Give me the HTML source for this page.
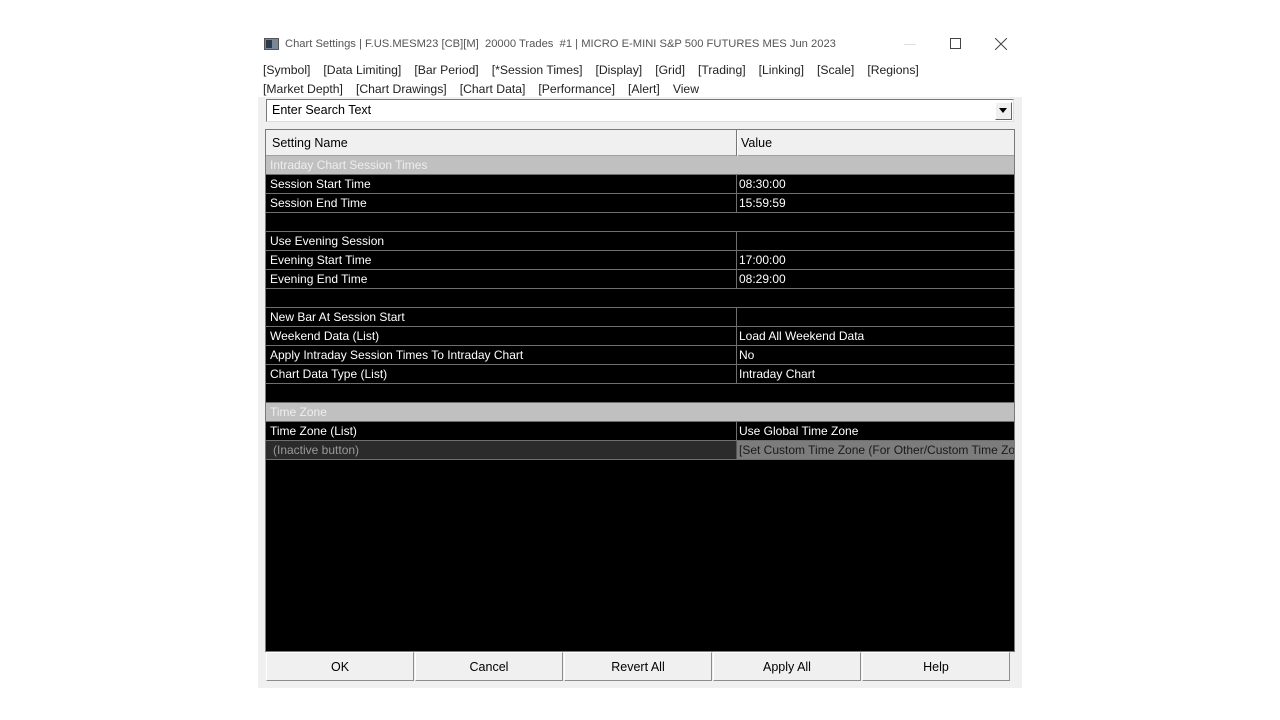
<!DOCTYPE html>
<html><head><meta charset="utf-8"><style>
*{margin:0;padding:0;box-sizing:border-box}
body{width:1280px;height:720px;background:#fff;position:relative;overflow:hidden;font-family:"Liberation Sans",sans-serif;font-size:12px;color:#000}
.a{position:absolute;white-space:nowrap}
.t{color:#555;font-size:11.2px;top:38px}
.m{color:#222;font-size:12.2px}
.m b{font-weight:normal;display:inline-block;width:13px}
.row{position:absolute;left:266px;width:748px;height:19px;background:#000;border-bottom:1px solid #6e6e6e;color:#fff;font-size:12px}
.row span{position:absolute;top:2px;left:4px;white-space:nowrap}
.row .v{left:473px}
.row .d{position:absolute;left:470px;top:0;width:1px;height:18px;background:#6e6e6e}
.grp{background:#c0c0c0;color:#eee}
.btn{position:absolute;top:652px;height:29px;width:148px;background:#f0f0f0;border:1px solid #8c8c8c;border-top-color:#fff;border-left-color:#fff;text-align:center;line-height:28px;font-size:12.5px}
</style></head><body>
<div class="a" style="left:264px;top:38px;width:15px;height:12px;background:#7a8796;border:1px solid #555"></div>
<div class="a" style="left:266px;top:40px;width:6px;height:8px;background:#2b3a4a"></div>
<div class="a t" style="left:285px">Chart Settings | F.US.MESM23 [CB][M]&nbsp; 20000 Trades&nbsp; #1 | MICRO E-MINI S&amp;P 500 FUTURES MES Jun 2023</div>
<div class="a" style="left:904px;top:44px;width:12px;height:1px;background:#ddd"></div>
<div class="a" style="left:950px;top:38px;width:11px;height:11px;border:1px solid #444"></div>
<svg class="a" style="left:995px;top:38px" width="12" height="12"><path d="M0 0L12 12M12 0L0 12" stroke="#444" stroke-width="1"/></svg>
<div class="a m" style="left:263px;top:63px">[Symbol]<b></b>[Data Limiting]<b></b>[Bar Period]<b></b>[*Session Times]<b></b>[Display]<b></b>[Grid]<b></b>[Trading]<b></b>[Linking]<b></b>[Scale]<b></b>[Regions]</div>
<div class="a m" style="left:263px;top:82px">[Market Depth]<b></b>[Chart Drawings]<b></b>[Chart Data]<b></b>[Performance]<b></b>[Alert]<b></b>View</div>
<div class="a" style="left:258px;top:97px;width:764px;height:591px;background:#f0f0f0"></div>
<div class="a" style="left:266px;top:99px;width:748px;height:23px;background:#fff;border:1px solid #7a7a7a;border-right-color:#ddd;border-bottom-color:#ddd"></div>
<div class="a" style="left:272px;top:103px;font-size:12.5px">Enter Search Text</div>
<div class="a" style="left:995px;top:102px;width:17px;height:18px;background:#f0f0f0;border:1px solid #fff;border-right-color:#666;border-bottom-color:#666"></div>
<svg class="a" style="left:999px;top:108px" width="9" height="6"><path d="M0 0H8L4 5Z" fill="#000"/></svg>
<div class="a" style="left:265px;top:129px;width:750px;height:523px;border:1px solid #7a7a7a;background:#000"></div>
<div class="a" style="left:266px;top:130px;width:748px;height:26px;background:#f0f0f0;border-bottom:1px solid #a0a0a0"></div>
<div class="a" style="left:736px;top:130px;width:1px;height:26px;background:#777"></div>
<div class="a" style="left:737px;top:130px;width:1px;height:26px;background:#fff"></div>
<div class="a" style="left:272px;top:136px;font-size:12.5px">Setting Name</div>
<div class="a" style="left:741px;top:136px;font-size:12.5px">Value</div>

<div class="row grp" style="top:156px"><span>Intraday Chart Session Times</span></div>
<div class="row" style="top:175px"><span>Session Start Time</span><i class="d"></i><span class="v">08:30:00</span></div>
<div class="row" style="top:194px"><span>Session End Time</span><i class="d"></i><span class="v">15:59:59</span></div>
<div class="row" style="top:213px"></div>
<div class="row" style="top:232px"><span>Use Evening Session</span><i class="d"></i></div>
<div class="row" style="top:251px"><span>Evening Start Time</span><i class="d"></i><span class="v">17:00:00</span></div>
<div class="row" style="top:270px"><span>Evening End Time</span><i class="d"></i><span class="v">08:29:00</span></div>
<div class="row" style="top:289px"></div>
<div class="row" style="top:308px"><span>New Bar At Session Start</span><i class="d"></i></div>
<div class="row" style="top:327px"><span>Weekend Data (List)</span><i class="d"></i><span class="v">Load All Weekend Data</span></div>
<div class="row" style="top:346px"><span>Apply Intraday Session Times To Intraday Chart</span><i class="d"></i><span class="v">No</span></div>
<div class="row" style="top:365px"><span>Chart Data Type (List)</span><i class="d"></i><span class="v">Intraday Chart</span></div>
<div class="row" style="top:384px"></div>
<div class="row grp" style="top:403px"><span>Time Zone</span></div>
<div class="row" style="top:422px"><span>Time Zone (List)</span><i class="d"></i><span class="v">Use Global Time Zone</span></div>
<div class="row" style="top:441px;background:#2b2b2b;overflow:hidden"><span style="color:#999;left:7px">(Inactive button)</span><i class="d" style="background:#555"></i><div style="position:absolute;left:471px;top:0;width:277px;height:18px;background:#7c7c7c"></div><span class="v" style="color:#1a1a1a">[Set Custom Time Zone (For Other/Custom Time Zone)]</span></div>

<div class="btn" style="left:266px">OK</div>
<div class="btn" style="left:415px">Cancel</div>
<div class="btn" style="left:564px">Revert All</div>
<div class="btn" style="left:713px">Apply All</div>
<div class="btn" style="left:862px">Help</div>
</body></html>
